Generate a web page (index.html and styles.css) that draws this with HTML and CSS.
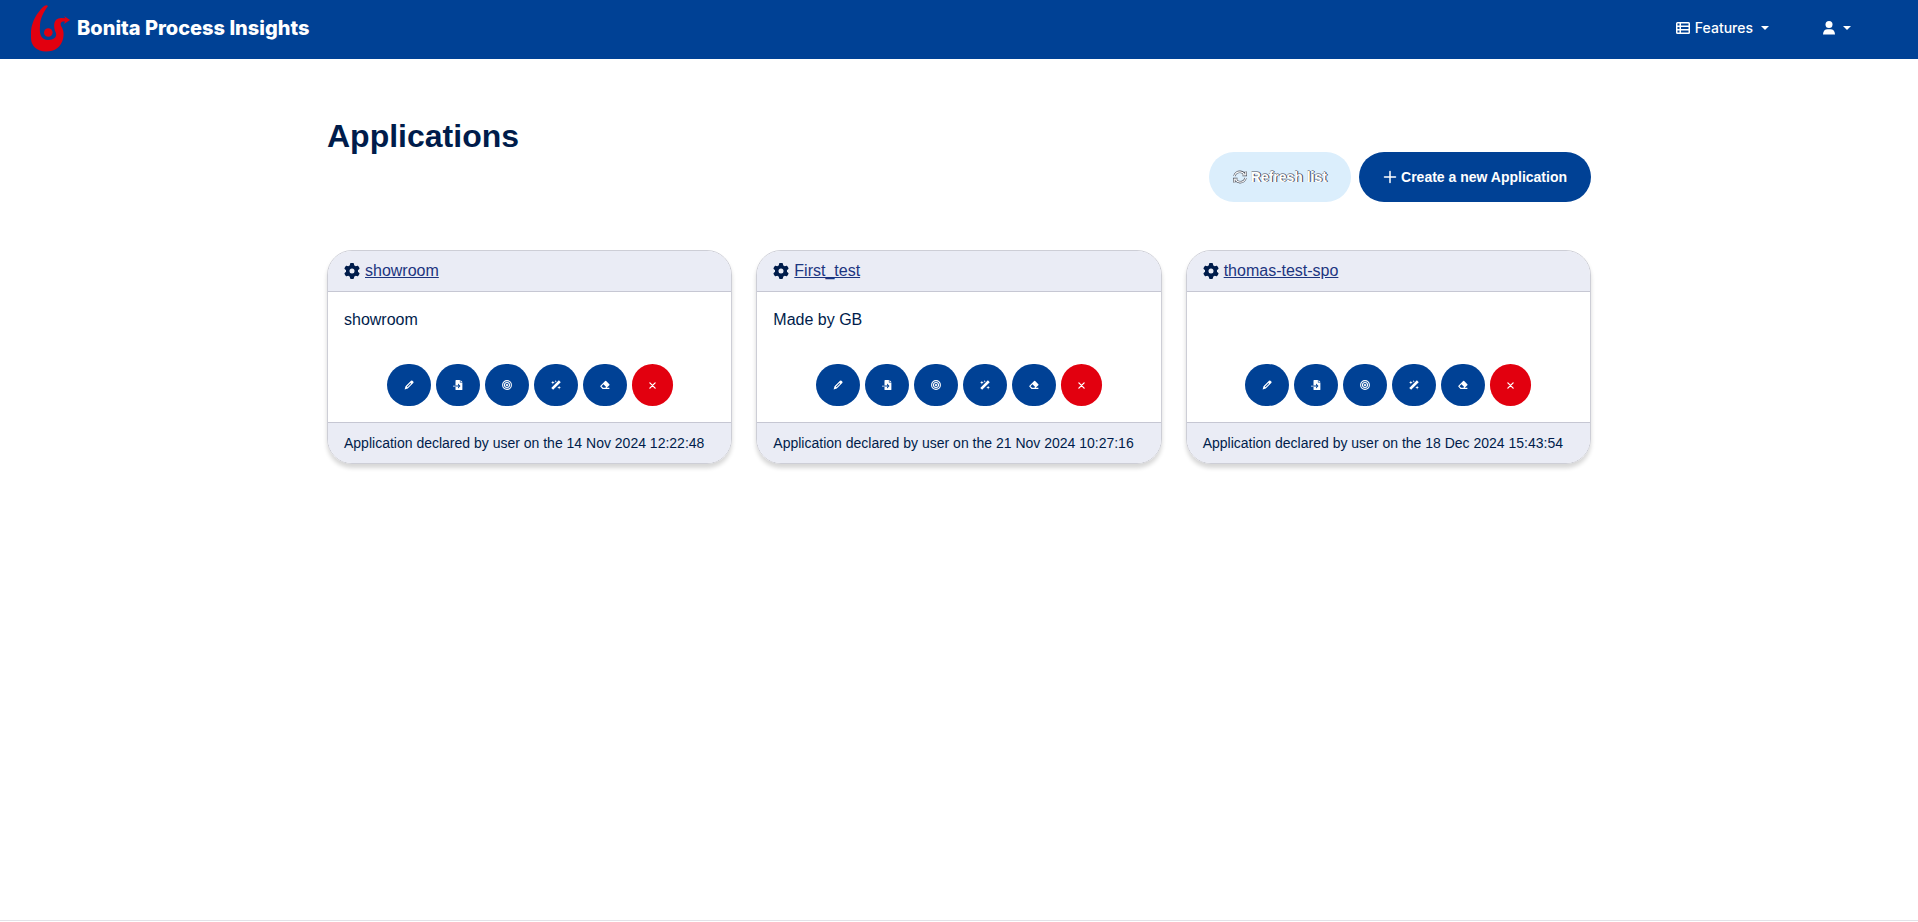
FILE: index.html
```html
<!DOCTYPE html>
<html lang="en">
<head>
<meta charset="utf-8">
<title>Bonita Process Insights</title>
<link rel="stylesheet" href="styles.css">
</head>
<body>
<svg class="sprite" aria-hidden="true">
  <symbol id="gear" viewBox="0 0 512 512"><path d="M495.900 166.600c3.200 8.700.5 18.400-6.400 24.600l-43.300 39.400c1.100 8.300 1.700 16.800 1.700 25.400s-.6 17.100-1.700 25.400l43.300 39.400c6.900 6.200 9.600 15.900 6.400 24.600-4.400 11.900-9.700 23.300-15.800 34.300l-4.700 8.100c-6.600 11-14 21.400-22.100 31.200-5.900 7.200-15.700 9.600-24.500 6.800l-55.700-17.700c-13.400 10.300-28.200 18.900-44 25.400l-12.500 57.100c-2 9.100-9 16.300-18.200 17.800-13.800 2.300-28 3.500-42.500 3.500s-28.700-1.200-42.500-3.500c-9.200-1.500-16.200-8.700-18.200-17.800l-12.500-57.100c-15.800-6.500-30.600-15.100-44-25.400l-55.600 17.800c-8.800 2.800-18.600.3-24.500-6.800-8.100-9.800-15.500-20.200-22.100-31.200l-4.700-8.100c-6.100-11-11.400-22.400-15.800-34.300-3.200-8.700-.5-18.400 6.400-24.600l43.300-39.400C64.600 273.100 64 264.600 64 256s.6-17.100 1.700-25.400L22.400 191.200c-6.900-6.200-9.600-15.900-6.400-24.600 4.400-11.900 9.700-23.300 15.800-34.300l4.700-8.100c6.600-11 14-21.400 22.100-31.200 5.900-7.200 15.700-9.600 24.500-6.800l55.700 17.700c13.400-10.300 28.200-18.900 44-25.400l12.500-57.100c2-9.100 9-16.300 18.200-17.800C227.300 1.200 241.500 0 256 0s28.700 1.200 42.500 3.500c9.200 1.500 16.200 8.700 18.200 17.800l12.500 57.100c15.800 6.500 30.600 15.100 44 25.400l55.700-17.700c8.800-2.800 18.600-.3 24.500 6.800 8.100 9.800 15.500 20.200 22.100 31.200l4.700 8.100c6.100 11 11.400 22.400 15.800 34.300zM256 336a80 80 0 1 0 0-160 80 80 0 1 0 0 160z"/></symbol>
  <symbol id="pencil" viewBox="0 0 16 16"><path fill-rule="evenodd" d="M11.200 1.200a1.600 1.600 0 0 1 2.300 0l1.300 1.300a1.600 1.600 0 0 1 0 2.300L6 13.600 1 15l1.400-5zM4.500 10.600l1 1 5.800-5.800-1-1z"/></symbol>
  <symbol id="import" viewBox="0 0 16 16"><path d="M5 0h6v4h4v11a1 1 0 0 1-1 1H5a1 1 0 0 1-1-1v-4h4v2.500L12 9.500 8 5.700V8.500H4V1a1 1 0 0 1 1-1zM12 0l3 3h-3zM0 9h9v1.500H0z"/></symbol>
  <symbol id="target" viewBox="0 0 16 16"><g fill="none" stroke="currentColor" stroke-width="1.800"><circle cx="8" cy="8" r="7"/><circle cx="8" cy="8" r="4"/></g><circle cx="8" cy="8" r="1.800"/></symbol>
  <symbol id="wand" viewBox="0 0 16 16"><path d="M12.600.4l3 3L3.400 15.600l-3-3zM3 1l.8 2.200L6 4l-2.200.8L3 7l-.8-2.200L0 4l2.200-.8zM13 9l.8 2.200L16 12l-2.200.8L13 15l-.8-2.200L10 12l2.200-.8zM7.500 0l.5 1.500 1.500.5-1.500.5L7.500 4 7 2.500 5.500 2 7 1.500z"/></symbol>
  <symbol id="eraser" viewBox="0 0 16 16"><path fill-rule="evenodd" d="M8.200 1.600a1.200 1.200 0 0 1 1.700 0l5 5a1.200 1.200 0 0 1 0 1.700L10.700 12.500H15V14.500H4L.8 10.800a1.200 1.200 0 0 1 0-1.700zM5.500 6.600L2.400 9.900 5 12.500h3.400l1.500-1.500z"/></symbol>
  <symbol id="cross" viewBox="0 0 16 16"><path d="M2 2l12 12M14 2L2 14" stroke="currentColor" stroke-width="2.900" stroke-linecap="round"/></symbol>
</svg>

<header class="navbar">
  <a class="brand" href="#">
    <svg class="brand-logo" viewBox="31 4 40 48" aria-hidden="true"><path d="M43 7Q46 4 48 6C43 13 40 19 40 26C39 35 42 40 48 40C54 40 57 37 56 33C53 27 53 18 61 18Q64 18 65.500 18.300L64 16L70 20L64 24L65 21.500C61 21 60 23 61 26C64 30 64 35 63 39C61 47 55 51.500 46 51.500C37 51.500 31 46 31 38V31C32 21 37 13 43 7Z"/><circle cx="48.300" cy="32.500" r="4.300"/></svg>
    <span>Bonita Process Insights</span>
  </a>
  <nav class="menu">
    <button class="menu-item" type="button">
      <svg class="icon-list" viewBox="0 0 14 12" aria-hidden="true"><path fill-rule="evenodd" d="M1.500 0h11A1.500 1.500 0 0 1 14 1.500v9a1.500 1.500 0 0 1-1.500 1.500h-11A1.500 1.500 0 0 1 0 10.500v-9A1.500 1.500 0 0 1 1.500 0zM1.500 1.500v2h2v-2zM5 1.500v2h7.500v-2zM1.500 5v2h2V5zM5 5v2h7.500V5zM1.500 8.500v2h2v-2zM5 8.500v2h7.500v-2z"/></svg>
      <span>Features</span><i class="caret"></i>
    </button>
    <button class="menu-item" type="button" aria-label="User menu">
      <svg class="icon-user" viewBox="0 0 12 14" aria-hidden="true"><circle cx="6" cy="3.500" r="3.500"/><path d="M0 13.500C0 10 2 8.300 4.500 8.300h3C10 8.300 12 10 12 13.500z"/></svg>
      <i class="caret"></i>
    </button>
  </nav>
</header>

<main class="container">
  <h1>Applications</h1>
  <div class="toolbar">
    <button class="btn btn-refresh" type="button">
      <svg class="btn-icon" viewBox="0 0 14 14" aria-hidden="true"><g fill="none"><path d="M1.500 6C2 3.500 4.500 1.800 7 1.800c2 0 3.500 1 4.500 2.500M12.800 1.500v3.500H9.500M12.500 8C12 10.500 9.500 12.200 7 12.200c-2 0-3.500-1-4.500-2.500M1.200 12.500V9h3.300" stroke="#454a56" stroke-width="2.400"/><path d="M1.500 6C2 3.500 4.500 1.800 7 1.800c2 0 3.500 1 4.500 2.500M12.800 1.500v3.500H9.500M12.500 8C12 10.500 9.500 12.200 7 12.200c-2 0-3.500-1-4.500-2.500M1.200 12.500V9h3.300" stroke="#fff" stroke-width="1.200"/></g></svg>
      <span>Refresh list</span>
    </button>
    <button class="btn btn-create" type="button">
      <svg class="btn-icon" viewBox="0 0 14 14" aria-hidden="true"><path d="M7 1.500v11M1.500 7h11" stroke="currentColor" stroke-width="1.500" stroke-linecap="round"/></svg>
      <span>Create a new Application</span>
    </button>
  </div>

  <section class="cards">
    <article class="card">
      <h2 class="card-header"><svg class="gear"><use href="#gear"/></svg><a href="#">showroom</a></h2>
      <div class="card-body">
        <p>showroom</p>
        <div class="actions">
          <button type="button" class="round" aria-label="Edit"><svg><use href="#pencil"/></svg></button>
          <button type="button" class="round" aria-label="Import"><svg><use href="#import"/></svg></button>
          <button type="button" class="round" aria-label="Target"><svg><use href="#target"/></svg></button>
          <button type="button" class="round" aria-label="Generate"><svg><use href="#wand"/></svg></button>
          <button type="button" class="round" aria-label="Clear"><svg><use href="#eraser"/></svg></button>
          <button type="button" class="round danger" aria-label="Delete"><svg><use href="#cross"/></svg></button>
        </div>
      </div>
      <footer class="card-footer">Application declared by user on the 14 Nov 2024 12:22:48</footer>
    </article>
    <article class="card">
      <h2 class="card-header"><svg class="gear"><use href="#gear"/></svg><a href="#">First_test</a></h2>
      <div class="card-body">
        <p>Made by GB</p>
        <div class="actions">
          <button type="button" class="round" aria-label="Edit"><svg><use href="#pencil"/></svg></button>
          <button type="button" class="round" aria-label="Import"><svg><use href="#import"/></svg></button>
          <button type="button" class="round" aria-label="Target"><svg><use href="#target"/></svg></button>
          <button type="button" class="round" aria-label="Generate"><svg><use href="#wand"/></svg></button>
          <button type="button" class="round" aria-label="Clear"><svg><use href="#eraser"/></svg></button>
          <button type="button" class="round danger" aria-label="Delete"><svg><use href="#cross"/></svg></button>
        </div>
      </div>
      <footer class="card-footer">Application declared by user on the 21 Nov 2024 10:27:16</footer>
    </article>
    <article class="card">
      <h2 class="card-header"><svg class="gear"><use href="#gear"/></svg><a href="#">thomas-test-spo</a></h2>
      <div class="card-body">
        <p></p>
        <div class="actions">
          <button type="button" class="round" aria-label="Edit"><svg><use href="#pencil"/></svg></button>
          <button type="button" class="round" aria-label="Import"><svg><use href="#import"/></svg></button>
          <button type="button" class="round" aria-label="Target"><svg><use href="#target"/></svg></button>
          <button type="button" class="round" aria-label="Generate"><svg><use href="#wand"/></svg></button>
          <button type="button" class="round" aria-label="Clear"><svg><use href="#eraser"/></svg></button>
          <button type="button" class="round danger" aria-label="Delete"><svg><use href="#cross"/></svg></button>
        </div>
      </div>
      <footer class="card-footer">Application declared by user on the 18 Dec 2024 15:43:54</footer>
    </article>
  </section>
</main>
<footer class="page-end"></footer>
</body>
</html>
```
FILE: styles.css
```css
* { box-sizing: border-box; }

body {
  margin: 0;
  min-height: 100vh;
  display: flex;
  flex-direction: column;
  background: #fff;
  color: #001c4b;
  font: 16px/24px "Liberation Sans", Arial, sans-serif;
}

button { font: inherit; border: 0; cursor: pointer; }
svg { fill: currentColor; flex: none; }
.sprite { position: absolute; width: 0; height: 0; }

.navbar {
  display: flex;
  align-items: center;
  justify-content: space-between;
  padding: 4px 67px 7px 31px;
  background: #004195;
  color: #fff;
  font-family: Inter, sans-serif;
}
.brand {
  display: flex;
  align-items: center;
  gap: 6px;
  color: #fff;
  font-size: 20px;
  font-weight: 800;
  text-decoration: none;
}
.brand-logo { width: 40px; height: 48px; color: #e2000f; }
.menu { display: flex; gap: 54px; }
.menu-item {
  display: flex;
  align-items: center;
  gap: 5px;
  padding: 0;
  background: none;
  color: #fff;
  font-size: 14px;
  font-weight: 500;
}
.icon-list { width: 14px; height: 12px; }
.icon-user { width: 12px; height: 14px; }
.caret {
  margin-left: 3px;
  border: 4px solid transparent;
  border-top-color: #fff;
  border-bottom: 0;
}

.container {
  width: 100%;
  max-width: 1312px;
  flex: 1;
  margin: 0 auto;
  padding: 57px 24px 0;
}
h1 { margin: 0; font-size: 32px; line-height: 40px; }
.toolbar {
  display: flex;
  justify-content: flex-end;
  gap: 8px;
  margin: -4px 0 48px;
}
.btn {
  display: flex;
  align-items: center;
  gap: 4px;
  height: 50px;
  padding: 0 24px;
  border-radius: 25px;
  font-size: 14px;
  font-weight: 700;
}
.btn-icon { width: 14px; height: 14px; }
.btn-refresh {
  background: #dbeefc;
  color: #fff;
  text-shadow: 1px 0 0 #3d424f, 0 -1px 0 #8b95a3;
}
.btn-create { background: #004195; color: #fff; }

.cards {
  display: grid;
  grid-template-columns: repeat(3, 1fr);
  gap: 24px;
}
.card {
  overflow: hidden;
  border: 1px solid #cdced6;
  border-radius: 25px;
  box-shadow: 0 4px 4px rgba(0, 0, 0, .16);
}
.card-header {
  display: flex;
  align-items: center;
  gap: 5px;
  margin: 0;
  padding: 8px 16px;
  border-bottom: 1px solid #c6c7d3;
  background: #eaecf5;
  font-size: 16px;
  font-weight: 400;
}
.card-header a { color: #1c3580; }
.gear { width: 16px; height: 16px; }
.card-body { padding: 16px; }
.card-body p { min-height: 24px; margin: 0 0 32px; }
.actions { display: flex; justify-content: center; gap: 5px; }
.round {
  display: grid;
  place-items: center;
  width: 44px;
  height: 42px;
  padding: 0;
  border-radius: 25px;
  background: #004195;
  color: #fff;
}
.round svg { width: 10px; height: 10px; }
.danger { width: 41px; background: #e2000f; }
.danger svg { width: 7px; height: 7px; }
.card-footer {
  padding: 8px 16px;
  border-top: 1px solid #c6c7d3;
  background: #eaecf5;
  font-size: 14px;
}
.page-end { height: 2px; border-top: 1px solid #e2e2e8; }
```
